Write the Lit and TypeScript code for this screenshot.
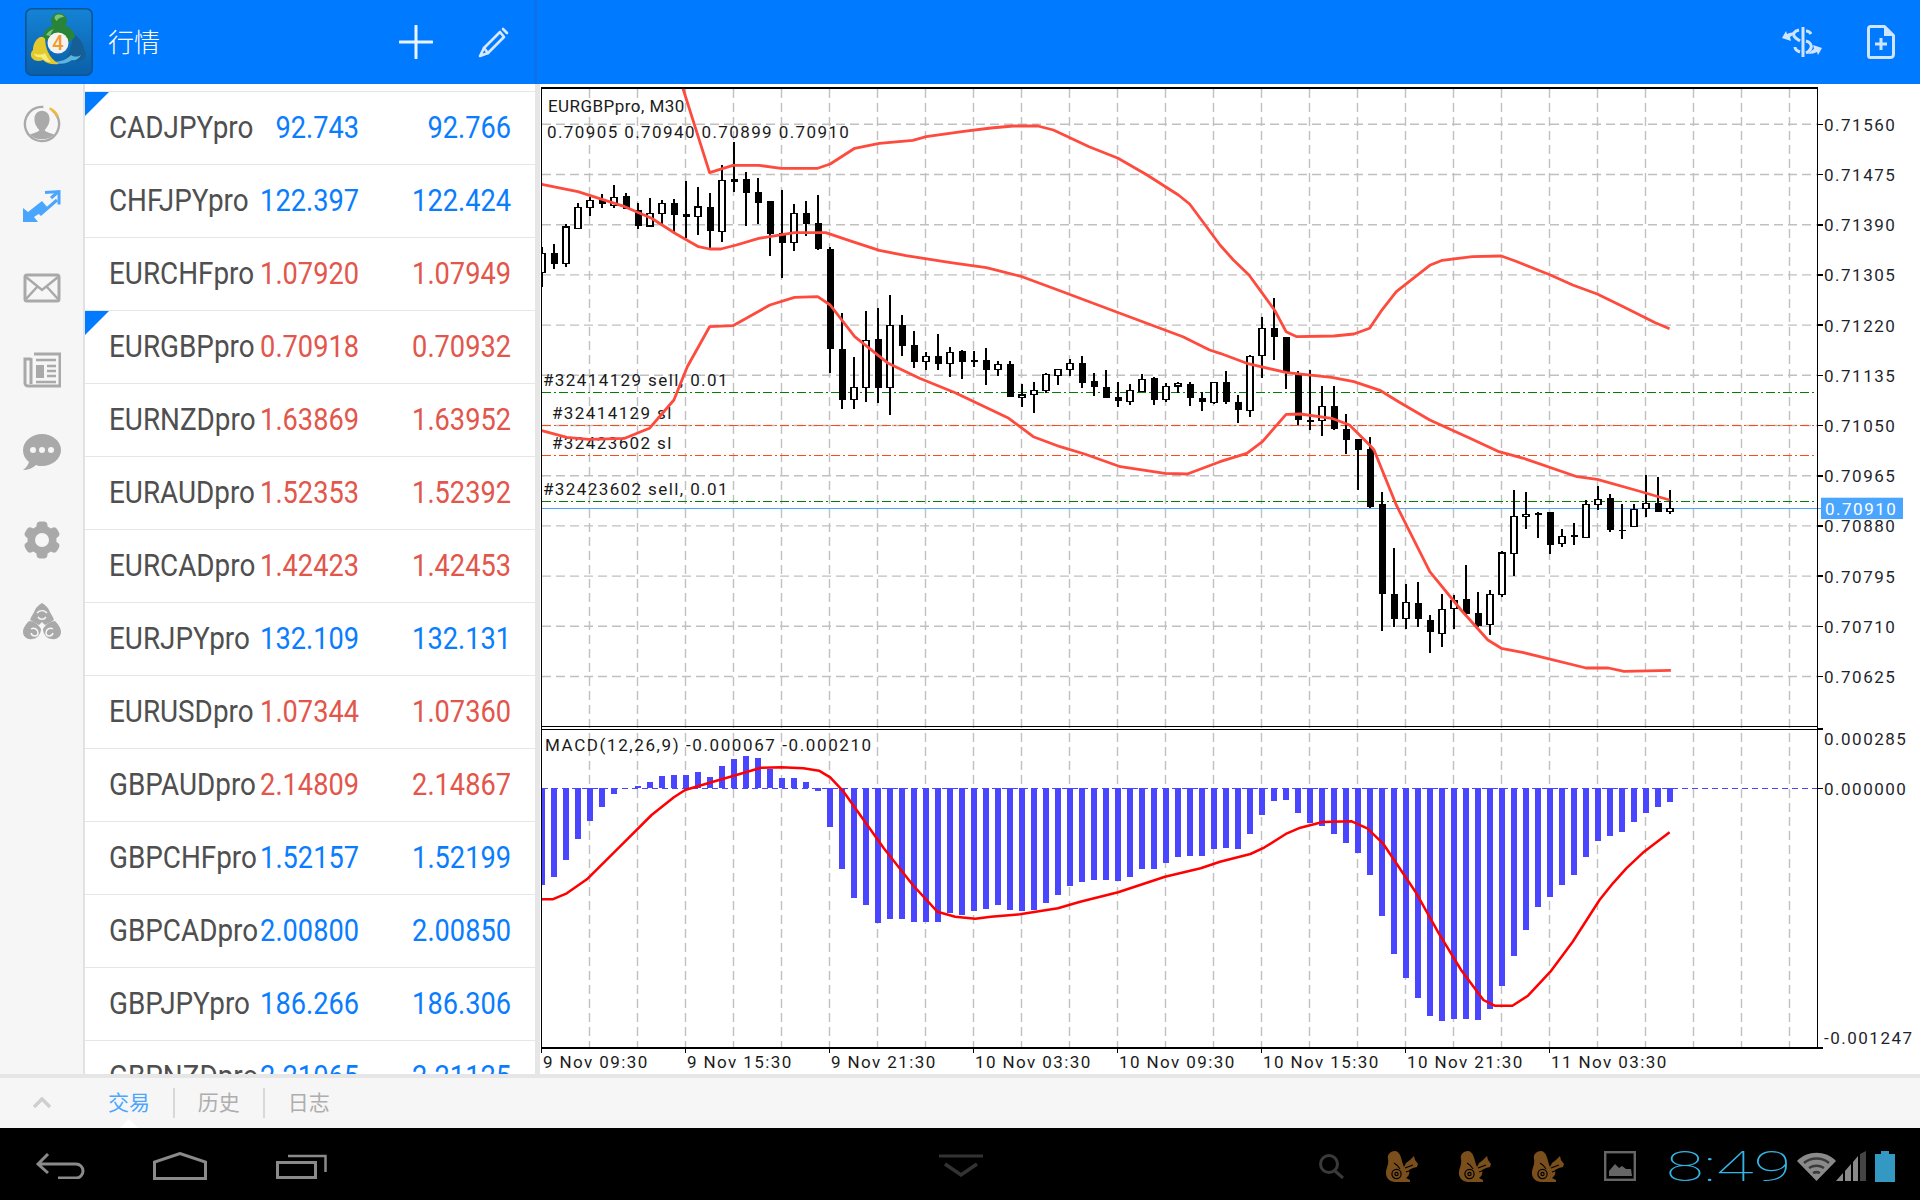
import { LitElement, html, css, svg } from "lit";
import { customElement } from "lit/decorators.js";

type P = [number, number];
const Z6 = (pts: P[]) => pts.map(([x, y]) => [540 + x / 2.24, 80 + y / 3] as P);
const Z7 = (pts: P[]) => pts.map(([x, y]) => [1220 + x / 2.24, 80 + y / 3] as P);
const M10 = (pts: P[]) => pts.map(([x, y]) => [540 + x / 2.24, 720 + y / 3] as P);
const M11 = (pts: P[]) => pts.map(([x, y]) => [1220 + x / 2.24, 720 + y / 3] as P);
const str = (pts: P[]) => pts.map(([x, y]) => `${x.toFixed(1)},${y.toFixed(1)}`).join(" ");

const upper = [
  ...Z6([[320, 25], [380, 278], [432, 256], [490, 256], [540, 265], [622, 265], [650, 252], [705, 205], [760, 190], [835, 181], [865, 170], [945, 155], [1010, 144], [1060, 138], [1115, 138], [1150, 150], [1230, 200], [1295, 235], [1360, 285], [1430, 345], [1455, 372], [1490, 435]]),
  ...Z7([[0, 495], [30, 540], [65, 585], [95, 640], [122, 690], [148, 755], [172, 770], [255, 768], [300, 762], [335, 745], [360, 695], [395, 635], [470, 556], [498, 541], [565, 530], [630, 528], [660, 542], [740, 585], [790, 615], [845, 642], [900, 678], [975, 728], [1007, 746]]),
];
const middle = [
  ...Z6([[4, 313], [85, 335], [190, 380], [250, 415], [305, 462], [355, 500], [380, 507], [405, 507], [440, 495], [490, 475], [570, 458], [640, 458], [700, 485], [760, 511], [820, 527], [920, 548], [1000, 563], [1080, 590], [1160, 630], [1290, 695], [1440, 770], [1500, 810]]),
  ...Z7([[0, 820], [60, 850], [150, 878], [250, 892], [300, 905], [360, 932], [400, 965], [470, 1020], [560, 1075], [625, 1115], [680, 1135], [800, 1190], [845, 1198], [930, 1230], [1007, 1260]]),
];
const lower = [
  ...Z6([[4, 1052], [60, 1072], [110, 1078], [190, 1075], [245, 1045], [300, 960], [330, 860], [380, 740], [432, 737], [515, 675], [570, 652], [622, 650], [650, 675], [705, 770], [780, 850], [850, 895], [930, 938], [1050, 1015], [1105, 1070], [1165, 1100], [1220, 1122], [1300, 1160], [1400, 1180], [1450, 1182]]),
  ...Z7([[0, 1145], [60, 1120], [95, 1085], [148, 1003], [180, 1002], [250, 1015], [290, 1035], [335, 1095], [345, 1110], [395, 1275], [470, 1475], [540, 1590], [600, 1680], [630, 1705], [680, 1718], [820, 1764], [870, 1764], [905, 1774], [1010, 1771]]),
];
const signal = [
  ...M10([[4, 538], [28, 538], [60, 520], [105, 478], [175, 385], [250, 285], [300, 232], [325, 210], [380, 188], [440, 165], [495, 143], [540, 142], [590, 145], [625, 152], [650, 172], [680, 215], [720, 290], [770, 385], [835, 495], [890, 575], [930, 590], [975, 596], [1010, 590], [1075, 583], [1160, 565], [1210, 545], [1295, 517], [1400, 470], [1480, 445]]),
  ...M11([[0, 425], [68, 402], [100, 382], [150, 340], [180, 323], [230, 306], [295, 304], [330, 325], [365, 370], [410, 460], [440, 520], [490, 640], [540, 750], [590, 840], [615, 857], [655, 857], [690, 827], [740, 755], [790, 665], [850, 540], [880, 490], [910, 445], [950, 395], [1007, 337]]),
];

// wickTop, wickBottom, bodyTop, bodyBottom, white (1) or black (0); values on a 3x scale from y=80
const candles: number[][] = [
  [500,620,520,578,1],[492,567,520,552,0],[433,560,441,551,1],[370,445,382,445,1],[350,408,361,382,1],[342,384,360,372,0],[315,384,352,377,1],[340,388,348,388,0],
  [370,447,390,438,0],[353,440,400,438,1],[360,435,370,400,1],[358,462,369,404,0],[303,475,402,410,0],[320,465,381,410,1],[340,510,381,453,0],[255,487,301,455,1],
  [187,335,297,305,0],[277,437,297,338,0],[295,432,336,368,0],[362,528,364,462,0],[330,593,460,488,0],[372,513,400,488,1],[363,468,399,432,0],[345,510,430,507,0],
  [500,878,507,806,0],[700,987,807,959,0],[830,987,922,958,1],[693,966,781,922,1],[685,968,778,924,0],[645,1005,736,922,1],[705,828,736,797,0],[753,865,796,845,0],
  [815,870,829,844,1],[763,870,829,851,0],[802,890,817,850,1],[810,896,814,845,0],[812,860,841,846,0],[804,915,841,869,0],[842,888,853,869,1],[842,952,852,950,0],
  [912,980,945,952,1],[907,998,931,943,1],[878,938,883,932,1],[866,915,869,886,1],[838,888,850,868,1],[828,925,850,909,0],[880,948,904,920,0],[870,955,922,953,0],
  [907,982,952,964,0],[912,975,931,964,1],[882,937,898,935,1],[892,975,894,959,0],[908,965,919,958,1],[906,938,910,918,1],[907,978,912,955,0],[935,992,955,967,0],
  [905,972,907,967,1],[873,973,906,967,0],[945,1028,967,990,0],[825,1010,829,992,1],[712,895,745,827,1],[655,840,745,770,0],[772,927,772,880,0],[873,1035,880,1020,0],
  [870,1050,1020,1025,0],[918,1068,979,1022,1],[918,1050,979,1047,0],[1002,1122,1047,1080,0],[1077,1230,1077,1110,0],[1072,1285,1107,1282,0],[1235,1652,1272,1542,0],
  [1405,1640,1542,1617,0],[1512,1648,1567,1616,1],[1506,1640,1569,1617,0],[1605,1718,1620,1655,0],[1542,1700,1588,1660,1],[1545,1648,1561,1586,1],[1455,1605,1558,1602,0],
  [1536,1640,1599,1637,0],[1530,1665,1543,1633,1],[1412,1550,1419,1543,1],[1230,1487,1309,1420,1],[1236,1346,1303,1309,1],[1296,1374,1300,1304,0],[1295,1422,1297,1394,0],
  [1347,1400,1369,1390,1],[1330,1394,1366,1370,0],[1260,1372,1273,1372,1],[1218,1290,1258,1273,1],[1242,1355,1254,1350,0],[1272,1376,1350,1352,0],[1272,1340,1288,1340,1],
  [1185,1310,1270,1285,1],[1192,1295,1270,1295,0],[1230,1302,1285,1294,1],
];

// end of each MACD bar on a 3x scale from y=720; zero line at 205
const bars = [495,470,420,356,302,260,222,203,199,186,168,165,165,156,171,138,117,108,114,147,174,174,186,213,321,447,534,555,609,597,597,606,606,606,578,585,573,567,555,570,573,570,549,525,498,486,480,480,483,471,447,447,429,411,408,408,387,384,387,342,285,243,240,279,309,318,342,369,399,465,588,702,774,834,888,903,897,897,900,867,798,708,630,561,531,495,465,411,363,348,336,306,279,261,246];

const cx = (i: number) => 542 + 12 * i;
const GY = (i: number) => 124.3 + 50.2 * i;
const prices = ["0.71560","0.71475","0.71390","0.71305","0.71220","0.71135","0.71050","0.70965","0.70880","0.70795","0.70710","0.70625"];
const times = ["9 Nov 09:30","9 Nov 15:30","9 Nov 21:30","10 Nov 03:30","10 Nov 09:30","10 Nov 15:30","10 Nov 21:30","11 Nov 03:30"];

type Row = [string, string, string, "b" | "r", boolean?];
const rows: Row[] = [
  ["CADJPYpro","92.743","92.766","b",true],
  ["CHFJPYpro","122.397","122.424","b"],
  ["EURCHFpro","1.07920","1.07949","r"],
  ["EURGBPpro","0.70918","0.70932","r",true],
  ["EURNZDpro","1.63869","1.63952","r"],
  ["EURAUDpro","1.52353","1.52392","r"],
  ["EURCADpro","1.42423","1.42453","r"],
  ["EURJPYpro","132.109","132.131","b"],
  ["EURUSDpro","1.07344","1.07360","r"],
  ["GBPAUDpro","2.14809","2.14867","r"],
  ["GBPCHFpro","1.52157","1.52199","b"],
  ["GBPCADpro","2.00800","2.00850","b"],
  ["GBPJPYpro","186.266","186.306","b"],
  ["GBPNZDpro","2.21065","2.21125","b"],
];

const squirrel = html`<svg class="squirrel" viewBox="0 0 32 31"><path fill="#7a4f1c" d="M9 0C4 0 1 4 2 8c1 4-1 8-2 12-1 6 3 11 9 11h15v-2l-4-2c3-2 4-5 3-8l4-2 4-1 1-3-3-4-1-4-4 4-4 3-2 4c-2-4-2-8-4-12-1-2-3-4-5-4z"/><g fill="none" stroke="#000" stroke-width="1.200"><circle cx="10.500" cy="23" r="1.600"/><circle cx="10.500" cy="23" r="4.600"/><path d="M8 12c2 1 4 3 6 6M19 17l8-3M20 21l6-2"/></g></svg>`;

@customElement("app-root")
export class AppRoot extends LitElement {
  static styles = css`
    :host { display: block; width: 1920px; height: 1200px; overflow: hidden; background: #fff; font-family: Roboto, "Noto Sans CJK SC", sans-serif; }
    .page { display: flex; flex-direction: column; width: 1920px; height: 1200px; }

    .head { flex: 0 0 84px; background: #007aff; display: flex; align-items: center; }
    .head-left { width: 534px; height: 84px; display: flex; align-items: center; padding-left: 25px; box-sizing: border-box; }
    .logo { width: 68px; height: 68px; flex: none; display: block; }
    .title { margin-left: 15px; padding-bottom: 4px; color: #fff; font: 300 26px "Noto Sans CJK SC", sans-serif; flex: 1; }
    .plus { width: 34px; height: 34px; display: block; }
    .pencil { width: 32px; height: 32px; display: block; margin-left: 45px; margin-right: 24px; }
    .head-sep { width: 3px; height: 84px; background: #0a72ea; }
    .head-right { flex: 1; display: flex; justify-content: flex-end; align-items: center; padding-right: 25px; }
    .dollar { width: 40px; height: 31px; display: block; }
    .doc { width: 28px; height: 34px; display: block; margin-left: 45px; }

    .main { flex: 1; display: flex; min-height: 0; overflow: hidden; }
    .rail { flex: 0 0 83px; background: #f6f6f6; border-right: 2px solid #e2e2e2; display: flex; flex-direction: column; align-items: center; padding-top: 21px; box-sizing: content-box; }
    .rail-item { height: 82px; width: 83px; flex: none; display: flex; align-items: flex-start; justify-content: center; }
    .rail svg { display: block; width: 38px; height: 38px; }
    .gear-item { margin-top: 6px; }

    .list { flex: 0 0 450px; overflow: hidden; padding-top: 7px; box-sizing: border-box; background: #fff; }
    .row { position: relative; height: 73px; box-sizing: border-box; border-bottom: 1.5px solid #e6e6e6; display: grid; grid-template-columns: 148px 102px 152px; align-items: center; padding: 0 0 2px 24px; font-size: 32px; white-space: nowrap; line-height: 36px; }
    .row:first-child { border-top: 1.5px solid #e6e6e6; height: 74px; }
    .sym { color: #4f4f4f; display: block; transform: scaleX(.87); transform-origin: left center; }
    .num { display: flex; justify-content: flex-end; transform: scaleX(.85); transform-origin: right center; }
    .num.b { color: #0a7dff; }
    .num.r { color: #e2564b; }
    .flag { position: absolute; left: 0; top: 0; width: 24px; height: 24px; background: #007aff; clip-path: polygon(0 0, 100% 0, 0 100%); }
    .strip { flex: 0 0 5px; background: #e6e6e6; }
    .chart { flex: 1; min-width: 0; background: #fff; }
    .chart svg { display: block; width: 1380px; height: 990px; }

    .t { font-family: Roboto, sans-serif; font-size: 17px; fill: #1a1a1a; letter-spacing: 1.4px; }
    .t.name { letter-spacing: .45px; }
    .t.quote { letter-spacing: 1.4px; }
    .t.macd { letter-spacing: 1.6px; }
    .t.axis { fill: #1f1f2e; letter-spacing: 1.5px; }
    .t.tag { fill: #fff; letter-spacing: 1.5px; }
    .grid { stroke: #c0c0c0; stroke-width: 1.4; stroke-dasharray: 9 5; fill: none; }
    .frame { stroke: #000; stroke-width: 1.6; fill: none; }
    .inner { stroke: #000; stroke-width: 1.1; fill: none; }
    .order { stroke-width: 1.3; stroke-dasharray: 9 3 2 3; fill: none; }
    .green { stroke: #008000; }
    .orange { stroke: #ff4a14; }
    .price { stroke: #4aa5ff; stroke-width: 1.5; }
    .band { fill: none; stroke: #ff4a3e; stroke-width: 2.8; stroke-linejoin: round; }
    .sig { fill: none; stroke: #ff0000; stroke-width: 2.5; stroke-linejoin: round; }
    .wick { stroke: #000; stroke-width: 1.2; }
    .body-w { fill: #fff; stroke: #000; stroke-width: 1.2; }
    .body-b { fill: #000; }
    .bar { fill: #4a46ff; }
    .zero { stroke: #4a46ff; stroke-width: 1.2; stroke-dasharray: 6 4; }
    .tagbox { fill: #4aa5ff; }

    .sep { flex: 0 0 4px; background: #e6e6e6; }
    .tabs { flex: 0 0 50px; background: #f6f6f6; display: flex; align-items: center; position: relative; }
    .chev { width: 20px; height: 12px; margin-left: 32px; display: block; }
    .tab { font: 21px "Noto Sans CJK SC", sans-serif; color: #aeaeae; width: 88.5px; text-align: center; flex: none; padding-bottom: 5px; }
    .tab.on { color: #4aa5ff; margin-left: 51px; width: 70px; text-align: left; padding-left: 5px; box-sizing: border-box; }
    .tab-sep { width: 1.5px; height: 30px; background: #d8d8d8; flex: none; }
    .caret { position: absolute; left: 120px; bottom: 0; width: 18px; height: 9px; background: #fff; clip-path: polygon(50% 0, 100% 100%, 0 100%); }

    .nav { flex: 0 0 72px; background: #000; display: flex; align-items: center; padding: 4px 0 0 36px; box-sizing: border-box; }
    .nav svg { display: block; flex: none; }
    .nav .back { width: 49px; height: 26px; }
    .nav .home { width: 54px; height: 28px; margin-left: 68px; }
    .nav .recent { width: 51px; height: 26px; margin-left: 69px; }
    .nav .down { width: 44px; height: 25px; margin-left: 612px; }
    .nav .search { width: 27px; height: 25px; margin-left: 335px; }
    .squirrel { width: 32px; height: 31px; margin-left: 41px; }
    .nav .pic { width: 32px; height: 30px; margin-left: 40px; }
    .clock { width: 124px; margin-left: 30px; flex: none; color: #33b5e5; font: 100 43px/44px Roboto, sans-serif; }
    .clock span { display: inline-block; transform: scaleX(1.6); transform-origin: left center; }
    .nav .wifi { width: 39px; height: 29px; margin-left: 7px; }
    .nav .signal { width: 30px; height: 30px; }
    .nav .batt { width: 20px; height: 31px; margin-left: 9px; }
  `;

  private logo() {
    return html`<svg class="logo" viewBox="0 0 68 68">
      <defs><linearGradient id="lg" x1="0" y1="0" x2="0" y2="1"><stop offset="0" stop-color="#1583d6"/><stop offset="1" stop-color="#0b5fa8"/></linearGradient></defs>
      <rect x=".8" y=".8" width="66.4" height="66.4" rx="6" fill="url(#lg)" stroke="#0a5596" stroke-width="1.6"/>
      <path fill="#155f96" d="M48 26c6 3 11 9 11 16 2 2 3 6 0 9-3 3-8 3-11 1-5 4-12 6-19 4 8-2 13-6 15-12 2-5 4-12 4-18z"/>
      <path fill="#5cb4e0" d="M27 54c8 0 14-2 19-7 3 2 7 2 10 0-2 4-6 6-9 5-5 4-12 5-20 2z"/>
      <path fill="#e3c92c" d="M15 29c-5 3-7 8-7 13-2 2-3 5-1 8 2 3 7 4 11 2 4 4 10 5 16 4-5-3-9-7-11-12-2-4-3-10-3-15z"/>
      <path fill="#f5ec7c" d="M9 45c3 2 8 2 11 0 2 4 3 6 6 9-4 0-8-2-10-5-3 1-6 0-7-4z"/>
      <path fill="#2a8438" d="M34 5c5 0 8 4 8 8 0 2-1 4-2 5 5 1 9 5 10 11l-6 5H24l-6-5c1-6 5-10 10-11-1-1-2-3-2-5 0-4 3-8 8-8z"/>
      <path fill="#7cc47c" d="M30 8c3-2 7-2 9 1-3 0-6 1-7 4-2-1-3-3-2-5zM21 27c2-3 4-5 8-6-2 2-3 4-4 7z"/>
      <circle cx="33" cy="35" r="10.500" fill="#f2f2f2"/>
      <text x="33" y="42" text-anchor="middle" font-family="Roboto, sans-serif" font-size="20" font-weight="500" fill="#f39a2b">4</text>
    </svg>`;
  }

  private chart() {
    const vGrid: number[] = [];
    for (let i = 1; i <= 26; i++) vGrid.push(541.5 + 48 * i);
    return html`<svg viewBox="540 84 1380 990" xmlns="http://www.w3.org/2000/svg">
      <defs>
        <clipPath id="cp"><rect x="541.5" y="88" width="1276" height="638"/></clipPath>
        <clipPath id="cm"><rect x="541.5" y="729" width="1276" height="319"/></clipPath>
      </defs>
      ${vGrid.map((x) => svg`<line class="grid" x1=${x} x2=${x} y1="89" y2="1048"/>`)}
      ${prices.map((_, i) => svg`<line class="grid" x1="542" x2="1817" y1=${GY(i)} y2=${GY(i)}/>`)}
      <g shape-rendering="crispEdges">
        <line class="order green" x1="542" x2="1817" y1="392.3" y2="392.3"/>
        <line class="order orange" x1="542" x2="1817" y1="425.3" y2="425.3"/>
        <line class="order orange" x1="542" x2="1817" y1="455.3" y2="455.3"/>
        <line class="order green" x1="542" x2="1817" y1="501.3" y2="501.3"/>
        <line class="price" x1="542" x2="1822" y1="508.3" y2="508.3"/>
      </g>
      <text class="t name" x="548" y="111.5">EURGBPpro, M30</text>
      <text class="t quote" x="547" y="137.5">0.70905 0.70940 0.70899 0.70910</text>
      <text class="t" x="543" y="386">#32414129 sell, 0.01</text>
      <text class="t" x="552" y="419">#32414129 sl</text>
      <text class="t" x="552" y="449">#32423602 sl</text>
      <text class="t" x="543" y="495">#32423602 sell, 0.01</text>
      <g clip-path="url(#cp)" shape-rendering="crispEdges">
        ${candles.map((c, i) => {
          const x = cx(i);
          const y = (v: number) => 80 + v / 3;
          const h = Math.max(1, (c[3] - c[2]) / 3);
          return svg`<line class="wick" x1=${x} x2=${x} y1=${y(c[0])} y2=${y(c[1])}/>
            ${c[4]
              ? svg`<rect class="body-w" x=${x - 3} width="6" y=${y(c[2])} height=${h}/>`
              : svg`<rect class="body-b" x=${x - 3} width="6.500" y=${y(c[2])} height=${h}/>`}`;
        })}
      </g>
      <g clip-path="url(#cp)">
        <polyline class="band" points=${str(upper)}/>
        <polyline class="band" points=${str(middle)}/>
        <polyline class="band" points=${str(lower)}/>
      </g>
      <g clip-path="url(#cm)" shape-rendering="crispEdges">
        <line class="zero" x1="542" x2="1817" y1="788.3" y2="788.3"/>
        ${bars.map((b, i) => {
          const y = 720 + b / 3;
          const top = Math.min(y, 788.3);
          return svg`<rect class="bar" x=${cx(i) - 3} width="6" y=${top} height=${Math.abs(y - 788.3)}/>`;
        })}
      </g>
      <polyline class="sig" clip-path="url(#cm)" points=${str(signal)}/>
      <text class="t macd" x="545" y="751">MACD(12,26,9) -0.000067 -0.000210</text>

      <path class="frame" d="M541.5 1048 V88 H1817.5 V1048 H541.5" shape-rendering="crispEdges"/>
      <path class="inner" d="M541.5 726.5 H1817.5 M541.5 729.500 H1817.5" shape-rendering="crispEdges"/>
      ${prices.map((_, i) => svg`<line class="frame" x1="1817" x2="1823" y1=${GY(i)} y2=${GY(i)} shape-rendering="crispEdges"/>`)}
      ${[728.9, 788.3, 1048].map((y) => svg`<line class="frame" x1="1817" x2="1823" y1=${y} y2=${y} shape-rendering="crispEdges"/>`)}
      ${times.map((_, i) => svg`<line class="frame" x1=${541.5 + 144 * i} x2=${541.5 + 144 * i} y1="1048" y2="1053" shape-rendering="crispEdges"/>`)}
      ${prices.map((p, i) => svg`<text class="t axis" x="1824" y=${GY(i) + 6.5}>${p}</text>`)}
      <rect class="tagbox" x="1821" y="497.7" width="82" height="21.3"/>
      <text class="t tag" x="1825" y="515">0.70910</text>
      <text class="t axis" x="1824" y="744.5">0.000285</text>
      <text class="t axis" x="1824" y="794.5">0.000000</text>
      <text class="t axis" x="1824" y="1043.5">-0.001247</text>
      ${times.map((t, i) => svg`<text class="t" x=${543 + 144 * i} y="1068">${t}</text>`)}
    </svg>`;
  }

  private gear() {
    const teeth = [0, 60, 120, 180, 240, 300];
    return html`<svg viewBox="0 0 38 38"><g fill="#a9a9a9">
      ${teeth.map((a) => svg`<rect x="13.5" y="0.5" width="11" height="9" rx="4" transform="rotate(${a} 19 19)"/>`)}
      <circle cx="19" cy="19" r="14.5"/></g><circle cx="19" cy="19" r="7" fill="#f6f6f6"/></svg>`;
  }

  render() {
    return html`<div class="page">
      <div class="head">
        <div class="head-left">
          ${this.logo()}
          <div class="title">行情</div>
          <svg class="plus" viewBox="0 0 34 34"><path d="M17 1v32M1 17h32" stroke="#fff" stroke-width="3" stroke-linecap="round" fill="none" opacity=".92"/></svg>
          <svg class="pencil" viewBox="0 0 32 32"><g fill="none" stroke="#d8e9ff" stroke-width="2.600" stroke-linejoin="round" stroke-linecap="round"><path d="M22 6L6 22l-4 8 8-3L26 11z"/><path d="M25 3l4 4"/><path d="M6 22l4 5"/></g></svg>
        </div>
        <div class="head-sep"></div>
        <div class="head-right">
          <svg class="dollar" viewBox="0 0 40 31"><g fill="none" stroke="#cfe4ff" stroke-width="3"><path d="M21 0v30"/><path d="M17 3c-5 1-6 4-5 6 1 2 3 3 6 5"/><path d="M13 20c0 2 2 4 5 5"/><path d="M24 4c2 0 4 1 5 3"/><path d="M24 14c4 1 6 4 5 7-1 3-3 4-5 5"/></g><path fill="#cfe4ff" d="M0 11l9 3-1-4c3-2 4-3 6-5-4 0-7 1-9 2L4 4z"/><path fill="#cfe4ff" transform="rotate(180 20 16)" d="M0 11l9 3-1-4c3-2 4-3 6-5-4 0-7 1-9 2L4 4z"/></svg>
          <svg class="doc" viewBox="0 0 28 34"><path d="M3.500 1.500h14l9 9v19a3 3 0 0 1-3 3h-20a2 2 0 0 1-2-2V3.500a2 2 0 0 1 2-2z" fill="none" stroke="#cfe4ff" stroke-width="3" stroke-linejoin="round"/><path d="M17 1l10 10h-10z" fill="#cfe4ff"/><path d="M14 13v12M8 19h12" stroke="#cfe4ff" stroke-width="3" fill="none"/></svg>
        </div>
      </div>
      <div class="main">
        <div class="rail">
          <div class="rail-item"><svg viewBox="0 0 40 40"><circle cx="20" cy="20" r="18" fill="none" stroke="#aaa" stroke-width="2.500" stroke-dasharray="92 10" transform="rotate(-20 20 20)"/><path d="M28 3.500a18 18 0 0 1 9 9" fill="none" stroke="#f4b93c" stroke-width="2.500"/><path fill="#aaa" d="M20 6c5 0 8 4 8 9s-3 9-5 11v1c3 2 7 3 10 4a19 19 0 0 1-26 0c3-1 7-2 10-4v-1c-2-2-5-6-5-11s3-9 8-9z"/></svg></div>
          <div class="rail-item"><svg viewBox="0 0 38 32"><path fill="#4aa5ff" d="M0 32V18l5 4 14-11 6 7-14 9 4 5z"/><g fill="none" stroke="#4aa5ff" stroke-width="3"><path d="M22 2.500l14-1v13"/><path d="M35 2L28 8"/><path d="M34 10l-16 14-3-3"/></g></svg></div>
          <div class="rail-item"><svg viewBox="0 0 38 38"><rect x="2" y="6" width="34" height="26" rx="2" fill="none" stroke="#a9a9a9" stroke-width="3"/><path d="M3 8l16 13L35 8M3 30l11-12M35 30L24 18" fill="none" stroke="#a9a9a9" stroke-width="2.500"/></svg></div>
          <div class="rail-item"><svg viewBox="0 0 38 38"><path d="M11 2h26v32H5a3 3 0 0 1-3-3V7h6" fill="none" stroke="#a9a9a9" stroke-width="3" transform="translate(0 1)"/><path d="M8 7v26" stroke="#a9a9a9" stroke-width="3"/><rect x="13" y="14" width="8" height="13" fill="#a9a9a9"/><path d="M13 9h20M24 15h9M24 20h9M24 25h9M13 31h20" stroke="#a9a9a9" stroke-width="2.500"/></svg></div>
          <div class="rail-item"><svg viewBox="0 -1 38 38"><path fill="#a9a9a9" d="M19 0c10 0 19 7 19 16s-9 16-19 16c-2 0-4 0-6-1-3 3-8 5-13 5 3-2 5-5 6-8-4-3-6-7-6-12C0 7 9 0 19 0z"/><circle cx="10" cy="16" r="3" fill="#f6f6f6"/><circle cx="19" cy="16" r="3" fill="#f6f6f6"/><circle cx="28" cy="16" r="3" fill="#f6f6f6"/></svg></div>
          <div class="rail-item gear-item">${this.gear()}</div>
          <div class="rail-item"><svg viewBox="0 0 38 38"><g fill="#a9a9a9"><path d="M19 0c3 2 6 4 7 7 1 3 4 6 5 10l-9 5-3-3-3 3-9-5c1-4 4-7 5-10 1-3 4-5 7-7z"/><path d="M6 18c5 0 9 3 12 8 0 5-4 10-9 10-4 1-9-2-9-7 0-4 3-8 6-11z"/><path d="M32 18c-5 0-9 3-12 8 0 5 4 10 9 10 4 1 9-2 9-7 0-4-3-8-6-11z"/></g><g fill="none" stroke="#f6f6f6" stroke-width="1.500"><path d="M14 10c3-3 7-3 10 0M15 14c2 3 6 3 8 0M8 26c3-2 7 0 7 4s-6 4-7 0M30 26c-3-2-7 0-7 4s6 4 7 0M19 22v6"/></g></svg></div>
        </div>
        <div class="list">
          ${rows.map((r) => html`<div class="row">
            ${r[4] ? html`<div class="flag"></div>` : ""}
            <span class="sym">${r[0]}</span>
            <span class="num ${r[3]}">${r[1]}</span>
            <span class="num ${r[3]}">${r[2]}</span>
          </div>`)}
        </div>
        <div class="strip"></div>
        <div class="chart">${this.chart()}</div>
      </div>
      <div class="sep"></div>
      <div class="tabs">
        <svg class="chev" viewBox="0 0 20 12"><path d="M2 10l8-8 8 8" fill="none" stroke="#cfcfcf" stroke-width="3.500"/></svg>
        <div class="tab on">交易</div><div class="tab-sep"></div>
        <div class="tab">历史</div><div class="tab-sep"></div>
        <div class="tab">日志</div>
        <div class="caret"></div>
      </div>
      <div class="nav">
        <svg class="back" viewBox="0 0 49 26"><path d="M12 1L2 11l10 9M2 11h38a7 7 0 0 1 0 14H22" fill="none" stroke="#8a8a8a" stroke-width="3"/></svg>
        <svg class="home" viewBox="0 0 54 28"><path d="M1.500 26.500V10L27 1.500 52.500 10v16.500z" fill="none" stroke="#8a8a8a" stroke-width="3"/></svg>
        <svg class="recent" viewBox="0 0 51 26"><path d="M1.500 9.500h38v15h-38z" fill="none" stroke="#8a8a8a" stroke-width="3"/><path d="M12 3h37.500v16" fill="none" stroke="#8a8a8a" stroke-width="2.500"/></svg>
        <svg class="down" viewBox="0 0 44 25"><path d="M0 2h44" stroke="#333" stroke-width="3"/><path d="M6 10l16 11 16-11" fill="none" stroke="#333" stroke-width="3.500"/></svg>
        <svg class="search" viewBox="0 0 27 25"><circle cx="11" cy="10" r="8.500" fill="none" stroke="#3a3a3a" stroke-width="3"/><path d="M17 17l8 7" stroke="#3a3a3a" stroke-width="3"/></svg>
        ${squirrel}${squirrel}${squirrel}
        <svg class="pic" viewBox="0 0 32 30"><rect x="1.200" y="1.200" width="29.600" height="27.600" fill="none" stroke="#666" stroke-width="2.400"/><path d="M5 25v-5l6-7 4 4 3-2 4 3 5 0 1 7z" fill="#666"/></svg>
        <div class="clock"><span>8:49</span></div>
        <svg class="wifi" viewBox="0 0 39 29"><path d="M0 9C10-2 29-2 39 9L19.500 29z" fill="#8a8a8a"/><path d="M7 11c7-6 18-6 25 0M12 16c5-3 10-3 15 0M16 21c2-1 5-1 7 0" stroke="#3a3a3a" stroke-width="2.500" fill="none"/></svg>
        <svg class="signal" viewBox="0 0 30 30"><path d="M0 30L7 22v8zM9 20l6-7v17H9zM17 11l5-6v25h-5z" fill="#8a8a8a"/><path d="M24 3l6-3v30h-6z" fill="#444"/></svg>
        <svg class="batt" viewBox="0 0 20 31"><path d="M6 0h8v3h6v28H0V3h6z" fill="#3399c2"/></svg>
      </div>
    </div>`;
  }
}
